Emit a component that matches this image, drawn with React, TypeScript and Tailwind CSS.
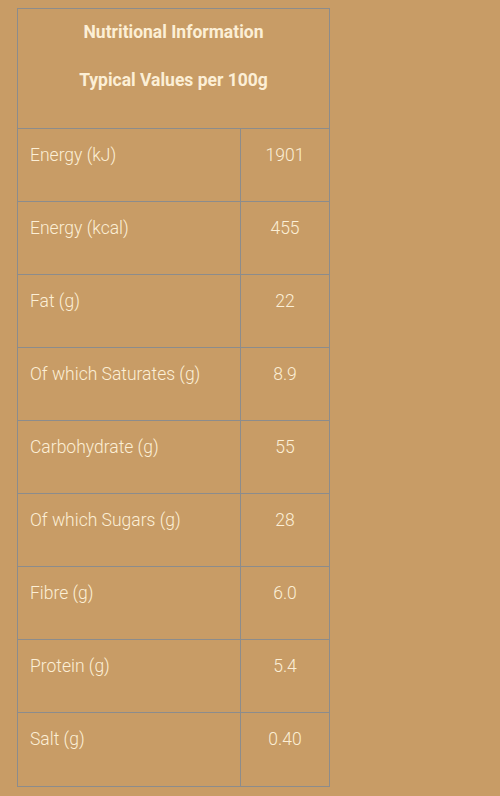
const rows: [string, string][] = [
  ["Energy (kJ)", "1901"],
  ["Energy (kcal)", "455"],
  ["Fat (g)", "22"],
  ["Of which Saturates (g)", "8.9"],
  ["Carbohydrate (g)", "55"],
  ["Of which Sugars (g)", "28"],
  ["Fibre (g)", "6.0"],
  ["Protein (g)", "5.4"],
  ["Salt (g)", "0.40"],
]

export default function App() {
  return (
    <div className="min-h-[796px] w-[500px] bg-[#c89c66] pt-[8px] pl-[17px] font-['Roboto',sans-serif] text-[17.5px] leading-6 text-[#fcefd6]">
      <div className="w-[313px] border border-[#8c8c8c]">
        <div className="flex h-[120px] flex-col items-center gap-[24px] border-b border-[#8c8c8c] pt-[11px] font-bold">
          <p>Nutritional Information</p>
          <p>Typical Values per 100g</p>
        </div>
        {rows.map(([label, value], i) => (
          <div
            key={label}
            className={`flex h-[73px] ${i < rows.length - 1 ? "border-b border-[#8c8c8c]" : ""}`}
          >
            <div className="w-[223px] border-r border-[#8c8c8c] pt-[14px] pl-[12px] font-light">{label}</div>
            <div className="flex-1 pt-[14px] text-center font-light">{value}</div>
          </div>
        ))}
      </div>
    </div>
  )
}
